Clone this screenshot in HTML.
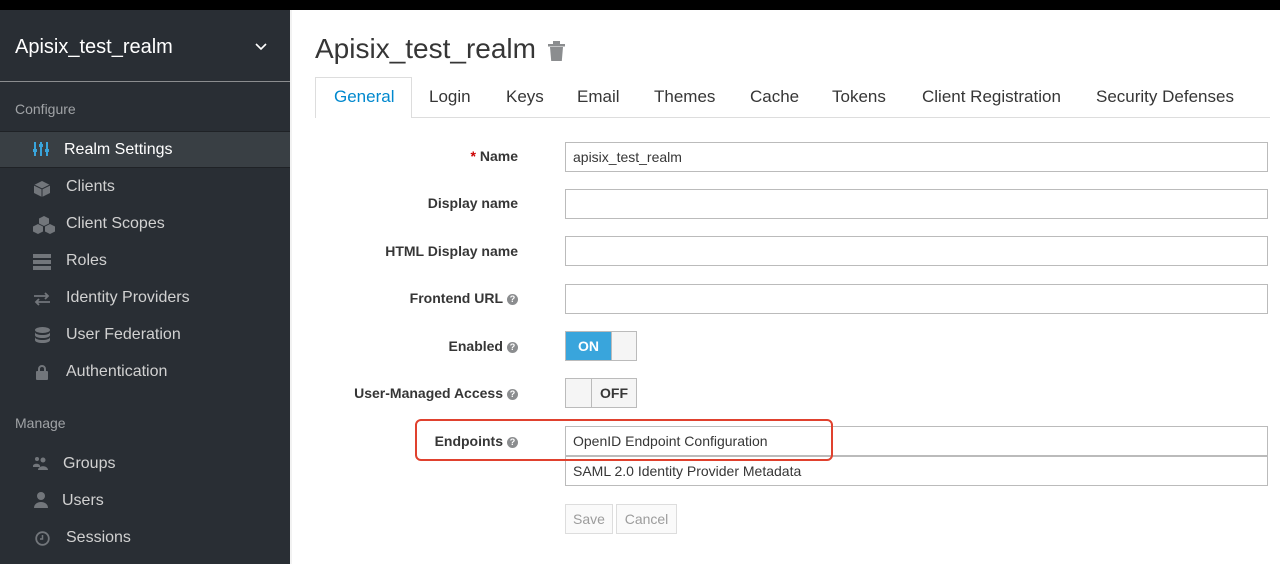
<!DOCTYPE html>
<html><head><style>
*{margin:0;padding:0;box-sizing:border-box}
body{width:1280px;height:564px;overflow:hidden;background:#fff;font-family:"Liberation Sans",sans-serif;position:relative}
.a{position:absolute;white-space:nowrap}
.sb{position:absolute;left:0;top:10px;width:290px;height:554px;background:#292e34}
.nav{color:#d1d1d1;font-size:16px}
.ic{position:absolute;fill:#72767b}
.lbl{font-size:14px;font-weight:bold;color:#363636;text-align:right;right:762px}
.inp{position:absolute;left:565px;width:703px;height:30px;border:1px solid #bbb;font-size:14px;color:#363636;padding:6px 7px}
.q{display:inline-block;width:11px;height:11px;border-radius:50%;background:#8b8d8f;color:#fff;font-size:9px;text-align:center;line-height:11px;vertical-align:1px;margin-left:4px}
.tab{font-size:17px;color:#363636;top:87px}
</style></head><body>
<div class="a" style="left:0;top:0;width:1280px;height:10px;background:#000"></div>
<div class="sb"></div>
<div class="a" style="left:290px;top:10px;width:2px;height:554px;background:#f2f2f2"></div>
<div class="a" style="left:15px;top:36px;font-size:20px;color:#fff">Apisix_test_realm</div>
<svg class="a" style="left:255px;top:43px" width="12" height="8"><path d="M1 1l5 5 5-5" stroke="#fff" stroke-width="1.6" fill="none"/></svg>
<div class="a" style="left:0;top:81px;width:290px;height:1px;background:#8b8d8f"></div>
<div class="a" style="left:15px;top:101px;font-size:14px;color:#a0a3a6">Configure</div>
<div class="a" style="left:0;top:131px;width:290px;height:37px;background:#393f44;border-top:1px solid #1f2226;border-bottom:1px solid #1f2226"></div>
<svg class="a" style="left:33px;top:141px" width="16" height="16"><g stroke="#39a5dc" stroke-width="2" fill="none"><path d="M2 1v14M8 1v14M14 1v14"/></g><g fill="#39a5dc"><rect x="0" y="8" width="4" height="3"/><rect x="6" y="3" width="4" height="3"/><rect x="12" y="8" width="4" height="3"/></g></svg>
<div class="a nav" style="left:64px;top:141px;color:#fff">Realm Settings</div>
<svg class="ic a" style="left:33px;top:180px" width="18" height="18"><path d="M9 1l8 4v8l-8 4-8-4V5z"/><path d="M1 5l8 4 8-4M9 9v8" stroke="#292e34" stroke-width="1" fill="none"/></svg>
<div class="a nav" style="left:66px;top:178px">Clients</div>
<svg class="ic a" style="left:33px;top:216px" width="22" height="18"><path d="M11 0l5 2.5v5L11 10 6 7.5v-5zM5 8l5 2.5v5L5 18 0 15.5v-5zM17 8l5 2.5v5L17 18l-5-2.5v-5z"/></svg>
<div class="a nav" style="left:66px;top:215px">Client Scopes</div>
<svg class="ic a" style="left:33px;top:254px" width="18" height="16"><rect y="0" width="18" height="4"/><rect y="6" width="18" height="4"/><rect y="12" width="18" height="4"/></svg>
<div class="a nav" style="left:66px;top:252px">Roles</div>
<svg class="ic a" style="left:33px;top:292px" width="18" height="14"><path d="M1 4h14M12 1l3 3-3 3M17 10H3M6 7l-3 3 3 3" stroke="#72767b" stroke-width="1.8" fill="none"/></svg>
<div class="a nav" style="left:66px;top:289px">Identity Providers</div>
<svg class="ic a" style="left:35px;top:327px" width="15" height="18"><ellipse cx="7.5" cy="3" rx="7.5" ry="3"/><path d="M0 5c0 4 15 4 15 0v3c0 4-15 4-15 0zM0 10c0 4 15 4 15 0v3c0 4-15 4-15 0z"/></svg>
<div class="a nav" style="left:66px;top:326px">User Federation</div>
<svg class="ic a" style="left:36px;top:364px" width="12" height="16"><path d="M3 7V5a3 3 0 016 0v2" stroke="#72767b" stroke-width="2" fill="none"/><rect y="7" width="12" height="9" rx="1"/></svg>
<div class="a nav" style="left:66px;top:363px">Authentication</div>
<div class="a" style="left:15px;top:415px;font-size:14px;color:#a0a3a6">Manage</div>
<svg class="ic a" style="left:33px;top:456px" width="16" height="14"><circle cx="4" cy="3" r="2"/><circle cx="10" cy="4" r="2.5"/><path d="M0 10c0-3 7-3 7 0v1H0zM5 14c0-5 10-5 10 0z"/></svg>
<div class="a nav" style="left:63px;top:455px">Groups</div>
<svg class="ic a" style="left:34px;top:492px" width="14" height="16"><circle cx="7" cy="4" r="4"/><path d="M0 16c0-8 14-8 14 0z"/></svg>
<div class="a nav" style="left:62px;top:492px">Users</div>
<svg class="a" style="left:35px;top:531px" width="15" height="15"><circle cx="7.5" cy="7.5" r="6.3" stroke="#72767b" stroke-width="1.8" fill="none"/><path d="M7.5 4v4H5" stroke="#72767b" stroke-width="1.5" fill="none"/></svg>
<div class="a nav" style="left:66px;top:529px">Sessions</div>

<div class="a" style="left:315px;top:33px;font-size:28px;color:#363636">Apisix_test_realm</div>
<svg class="a" style="left:548px;top:41px" width="17" height="20"><rect x="0" y="3" width="17" height="2.5" fill="#8b8d8f"/><rect x="5" y="0" width="7" height="3" fill="#8b8d8f"/><path d="M2 6h13l-1.2 14H3.2z" fill="#8b8d8f"/></svg>
<div class="a" style="left:315px;top:117px;width:955px;height:1px;background:#ddd"></div>
<div class="a" style="left:315px;top:77px;width:97px;height:41px;border:1px solid #ddd;border-bottom:none;background:#fff"></div>
<div class="a tab" style="left:334px;color:#0088ce">General</div>
<div class="a tab" style="left:429px">Login</div>
<div class="a tab" style="left:506px">Keys</div>
<div class="a tab" style="left:577px">Email</div>
<div class="a tab" style="left:654px">Themes</div>
<div class="a tab" style="left:750px">Cache</div>
<div class="a tab" style="left:832px">Tokens</div>
<div class="a tab" style="left:922px">Client Registration</div>
<div class="a tab" style="left:1096px">Security Defenses</div>

<div class="a lbl" style="top:148px"><span style="color:#c00">*</span> Name</div>
<div class="inp" style="top:142px">apisix_test_realm</div>
<div class="a lbl" style="top:195px">Display name</div>
<div class="inp" style="top:189px"></div>
<div class="a lbl" style="top:243px">HTML Display name</div>
<div class="inp" style="top:236px"></div>
<div class="a lbl" style="top:290px">Frontend URL<span class="q">?</span></div>
<div class="inp" style="top:284px"></div>
<div class="a lbl" style="top:338px">Enabled<span class="q">?</span></div>
<div class="a" style="left:565px;top:331px;width:72px;height:30px;border:1px solid #bbb;background:#f5f5f5"></div>
<div class="a" style="left:566px;top:332px;width:45px;height:28px;background:#39a5dc;color:#fff;font-weight:bold;font-size:14px;text-align:center;line-height:28px">ON</div>
<div class="a" style="left:611px;top:332px;width:1px;height:28px;background:#bbb"></div>
<div class="a lbl" style="top:385px">User-Managed Access<span class="q">?</span></div>
<div class="a" style="left:565px;top:378px;width:72px;height:30px;border:1px solid #bbb;background:#f5f5f5"></div>
<div class="a" style="left:591px;top:379px;width:1px;height:28px;background:#bbb"></div>
<div class="a" style="left:592px;top:379px;width:44px;height:28px;color:#363636;font-weight:bold;font-size:14px;text-align:center;line-height:28px">OFF</div>
<div class="a lbl" style="top:433px">Endpoints<span class="q">?</span></div>
<div class="inp" style="top:426px">OpenID Endpoint Configuration</div>
<div class="inp" style="top:456px">SAML 2.0 Identity Provider Metadata</div>
<div class="a" style="left:415px;top:419px;width:418px;height:42px;border:2.5px solid #e0412e;border-radius:6px"></div>
<div class="a" style="left:565px;top:504px;width:48px;height:30px;border:1px solid #ddd;background:#fafafa;color:#9c9c9c;font-size:14px;text-align:center;line-height:28px">Save</div>
<div class="a" style="left:616px;top:504px;width:61px;height:30px;border:1px solid #ddd;background:#fafafa;color:#9c9c9c;font-size:14px;text-align:center;line-height:28px">Cancel</div>
</body></html>
